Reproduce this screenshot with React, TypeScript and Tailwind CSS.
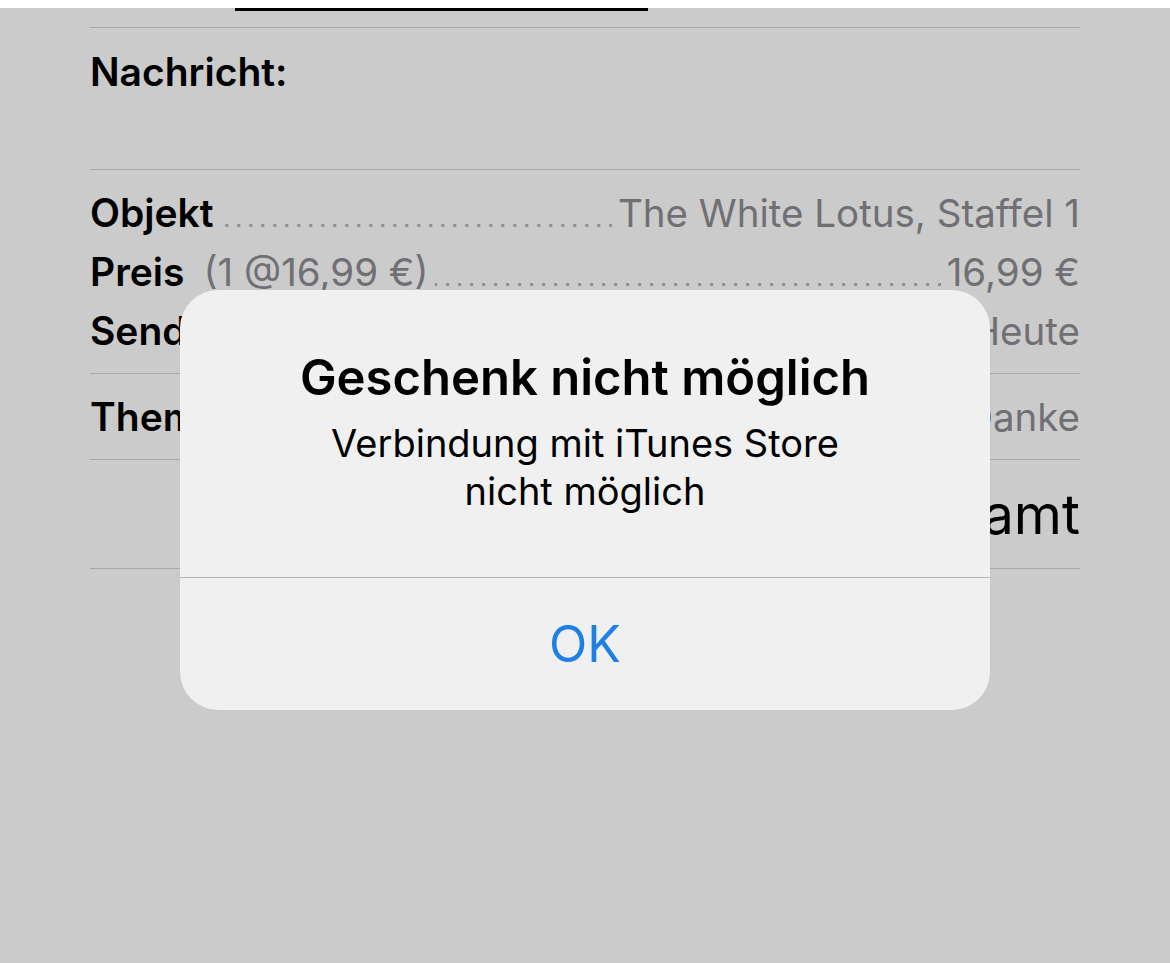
import React from "react";

const font = "font-['Inter','Noto_Sans',sans-serif]";

const Leader = () => (
  <span className="mx-[6px] h-[3px] flex-1 bg-[linear-gradient(to_left,#8e8e8e_3px,transparent_3px)] bg-size-[12px_3px] bg-position-[right_bottom] bg-repeat-x" />
);

const Row = ({ label, extra, value }: { label: string; extra?: string; value: string }) => (
  <div className="flex h-[59px] items-baseline leading-[59px]">
    <span className="text-[39px] font-semibold text-black">{label}</span>
    {extra && <span className="ml-[19px] text-[38.5px] text-[#707074]">{extra}</span>}
    <Leader />
    <span className="text-[38.5px] text-[#707074]">{value}</span>
  </div>
);

export default function App() {
  return (
    <div className={`relative h-[963px] w-[1170px] overflow-hidden bg-[#cbcbcb] ${font}`}>
      <div className="h-[8px] bg-white" />
      <div className="ml-[235px] h-[3px] w-[413px] bg-black" />

      <div className="px-[90px] pt-[16px]">
        <div className="h-px bg-[#a9a9a9]" />
        <div className="h-[141px] pt-[20px] text-[39px] font-semibold leading-[48px] text-black">Nachricht:</div>
        <div className="h-px bg-[#a9a9a9]" />

        <div className="py-[13px]">
          <Row label="Objekt" value="The White Lotus, Staffel 1" />
          <Row label="Preis" extra="(1 @16,99 €)" value="16,99 €" />
          <Row label="Sendedatum" value="Heute" />
        </div>
        <div className="h-px bg-[#a9a9a9]" />

        <div className="py-[13px]">
          <Row label="Thema" value="Danke" />
        </div>
        <div className="h-px bg-[#a9a9a9]" />

        <div className="flex h-[108px] items-center justify-end text-[55px] text-black">Gesamt</div>
        <div className="h-px bg-[#a9a9a9]" />
      </div>

      <div className="absolute left-[180px] top-[290px] flex h-[420px] w-[810px] flex-col overflow-hidden rounded-[38px] bg-[#f0f0f0]">
        <div className="flex h-[287px] flex-col items-center pt-[60px] text-center">
          <div className="text-[49px] font-semibold leading-[56px] text-black">Geschenk nicht möglich</div>
          <div className="mt-[13px] text-[38px] leading-[48px] text-black">
            Verbindung mit iTunes Store
            <br />
            nicht möglich
          </div>
        </div>
        <div className="h-px bg-[#b5b5b5]" />
        <div className="flex flex-1 items-center justify-center text-[50px] text-[#1e7fe6]">OK</div>
      </div>
    </div>
  );
}
